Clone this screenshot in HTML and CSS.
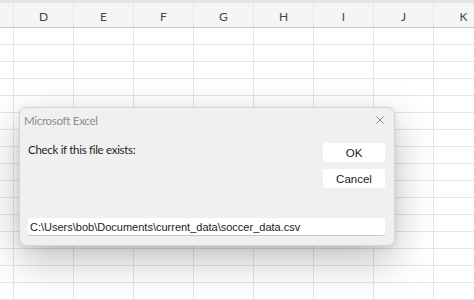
FILE: index.html
```html
<!DOCTYPE html>
<html>
<head>
<meta charset="utf-8">
<link rel="stylesheet" href="styles.css">
</head>
<body>
<div class="sheet">
  <div class="topstrip"></div>
  <div class="grid header">
    <div class="cell"></div>
    <div class="cell">D</div>
    <div class="cell">E</div>
    <div class="cell">F</div>
    <div class="cell">G</div>
    <div class="cell">H</div>
    <div class="cell">I</div>
    <div class="cell">J</div>
    <div class="cell">K</div>
  </div>
  <div class="rows" id="rows"></div>
</div>

<div class="dialog">
  <div class="titlebar">
    <span class="title">Microsoft Excel</span>
    <svg class="close" width="10" height="10" viewBox="0 0 10 10"><path d="M1.5 1.5 L8.5 8.5 M8.5 1.5 L1.5 8.5" stroke="#8a8a8a" stroke-width="1" fill="none"/></svg>
  </div>
  <div class="body">
    <div class="prompt">Check if this file exists:</div>
    <div class="buttons">
      <div class="btn">OK</div>
      <div class="btn">Cancel</div>
    </div>
  </div>
  <div class="input">C:\Users\bob\Documents\current_data\soccer_data.csv</div>
</div>
<script>
var rows = document.getElementById('rows');
for (var r = 0; r < 17; r++) {
  var g = document.createElement('div');
  g.className = 'grid row';
  for (var c = 0; c < 9; c++) {
    var d = document.createElement('div');
    d.className = 'cell';
    g.appendChild(d);
  }
  rows.appendChild(g);
}
</script>
</body>
</html>
```

FILE: styles.css
```css
html, body {
  margin: 0;
  padding: 0;
  background: #ffffff;
  overflow: hidden;
  width: 474px;
  height: 300px;
}
.sheet {
  width: 474px;
  height: 300px;
  overflow: hidden;
}
.topstrip {
  height: 3px;
  background: #e4e4e4;
}
.grid {
  display: grid;
  grid-template-columns: 14px repeat(8, 60px);
}
.header {
  height: 24px;
  background: #f5f5f5;
  border-bottom: 1px solid #c9c9c9;
}
.header .cell {
  box-sizing: border-box;
  border-right: 1px solid #e8e8e8;
  font-family: "Lato", "Noto Sans", sans-serif;
  font-size: 12px;
  color: #444;
  display: flex;
  align-items: center;
  justify-content: center;
  padding-top: 2px;
}
.row {
  height: 17px;
}
.row .cell {
  box-sizing: border-box;
  border-right: 1px solid #e5e5e5;
  border-bottom: 1px solid #e5e5e5;
}
.dialog {
  position: absolute;
  left: 19px;
  top: 107px;
  width: 376px;
  height: 139px;
  box-sizing: border-box;
  background: #f0f0f0;
  border: 1px solid #d4d4d4;
  border-radius: 7px;
  box-shadow: 0 14px 40px rgba(0, 0, 0, 0.26), 0 2px 6px rgba(0, 0, 0, 0.08);
  display: flex;
  flex-direction: column;
}
.titlebar {
  height: 24px;
  display: flex;
  align-items: center;
  justify-content: space-between;
  padding: 0 9px 0 4px;
}
.title {
  font-family: "Lato", "Noto Sans", sans-serif;
  font-size: 11.5px;
  letter-spacing: -0.3px;
  color: #8c8c8c;
}
.close {
  display: block;
}
.body {
  display: flex;
  justify-content: space-between;
  padding: 11px 9px 0 8px;
  flex: 1;
}
.prompt {
  font-family: "Lato", "Noto Sans", sans-serif;
  font-size: 11.5px;
  letter-spacing: -0.3px;
  color: #1e1e1e;
  padding-top: 0px;
}
.buttons {
  display: flex;
  flex-direction: column;
  gap: 7px;
}
.btn {
  width: 62px;
  height: 19px;
  background: #ffffff;
  border-radius: 3px;
  font-family: "Liberation Sans", Arial, sans-serif;
  font-size: 11.5px;
  color: #1a1a1a;
  display: flex;
  align-items: center;
  justify-content: center;
}
.input {
  margin: 0 9px 9px 8px;
  height: 17px;
  background: #ffffff;
  border-bottom: 1px solid #c8c8c8;
  border-radius: 2px;
  font-family: "Liberation Sans", Arial, sans-serif;
  font-size: 11px;
  color: #1a1a1a;
  display: flex;
  align-items: center;
  padding-left: 2px;
}
```
